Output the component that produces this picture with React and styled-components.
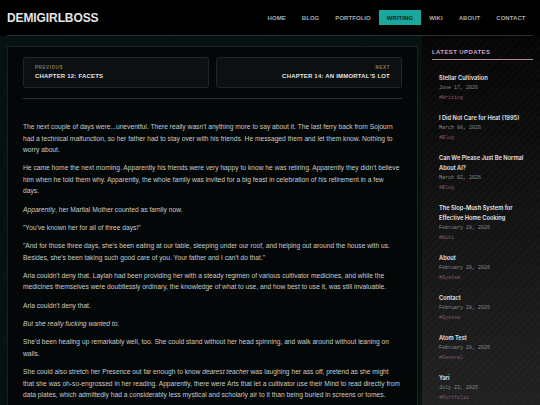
import React from 'react';
import styled, { createGlobalStyle } from 'styled-components';

const GlobalStyle = createGlobalStyle`
  html, body {
    margin: 0;
    padding: 0;
    background: #031010;
    color: #c6caca;
    font-family: "Liberation Sans", Arial, sans-serif;
    overflow: hidden;
  }
`;

const Page = styled.div`
  width: 540px;
  height: 405px;
  overflow: hidden;
  background:
    repeating-linear-gradient(135deg, rgba(255,255,255,0.012) 0 2px, transparent 2px 5px),
    #031111;
`;

const Header = styled.header`
  background: #000;
  height: 36px;
  padding: 0 7px;
  box-sizing: border-box;
`;

const HeaderInner = styled.div`
  height: 36px;
  display: flex;
  align-items: center;
  justify-content: space-between;
  border-bottom: 1px solid #262e2e;
  box-sizing: border-box;
`;

const Logo = styled.div`
  font-size: 12px;
  font-weight: bold;
  color: #e4e6e6;
  letter-spacing: -0.1px;
`;

const Nav = styled.nav`
  display: flex;
  align-items: center;
  gap: 1px;
`;

const NavItem = styled.a`
  font-size: 6px;
  font-weight: bold;
  letter-spacing: 0.05px;
  text-transform: uppercase;
  padding: 4.5px 7.5px;
  color: ${p => (p.$active ? '#062624' : '#a9adad')};
  background: ${p => (p.$active ? '#1aa89d' : 'transparent')};
`;

const Body = styled.div`
  display: flex;
  align-items: flex-start;
`;

const Main = styled.main`
  margin: 10px 0 0 7px;
  width: 411px;
  flex-shrink: 0;
  box-sizing: border-box;
  border: 1px solid #1a2323;
  background: #040707;
  padding: 10px 15px 20px;
`;

const Pager = styled.div`
  display: flex;
  gap: 7px;
  padding-bottom: 10px;
  border-bottom: 1px solid #2a3131;
`;

const PagerCard = styled.a`
  flex: 1;
  height: 31px;
  box-sizing: border-box;
  background: #0c1010;
  border: 1px solid #1e2626;
  border-radius: 3px;
  padding: 7px 11px;
  display: flex;
  flex-direction: column;
  gap: 3px;
  align-items: ${p => (p.$right ? 'flex-end' : 'flex-start')};
`;

const PagerLabel = styled.span`
  font-size: 4.5px;
  font-weight: bold;
  letter-spacing: 0.6px;
  color: #857d68;
  text-transform: uppercase;
`;

const PagerTitle = styled.span`
  font-size: 6px;
  font-weight: bold;
  letter-spacing: 0.2px;
  color: #e2e4e4;
  text-transform: uppercase;
`;

const Article = styled.article`
  padding: 22px 1.8px 0 0;
`;

const Para = styled.p`
  margin: 0 0 6.8px;
  font-size: 6.7px;
  line-height: 11.5px;
  color: #c8cccc;
  font-style: ${p => (p.$italic ? 'italic' : 'normal')};
`;

const Sidebar = styled.aside`
  flex: 1;
  align-self: stretch;
  min-height: 369px;
  margin-left: 4px;
  padding: 13px 7px 0 10px;
  background:
    repeating-linear-gradient(135deg, rgba(255,255,255,0.015) 0 2px, transparent 2px 5px),
    linear-gradient(to bottom, #050506, #232323);
`;

const SideTitle = styled.h3`
  margin: 0 0 13px;
  padding-bottom: 4px;
  border-bottom: 1px solid #a88ca0;
  font-size: 6px;
  font-weight: bold;
  letter-spacing: 0.4px;
  color: #cfa3c3;
  text-transform: uppercase;
`;

const UpdateList = styled.ul`
  list-style: none;
  margin: 0;
  padding: 0 0 0 7px;
  display: flex;
  flex-direction: column;
  gap: 10px;
`;

const Update = styled.li`
  display: flex;
  flex-direction: column;
`;

const UpdateTitle = styled.span`
  font-family: "Inter", "Noto Sans", sans-serif;
  font-size: 5.7px;
  font-weight: 600;
  line-height: 10px;
  color: #e6e6e6;
`;

const UpdateMeta = styled.span`
  font-family: "Liberation Mono", monospace;
  font-size: 5px;
  line-height: 10px;
  color: ${p => (p.$tag ? '#8a5878' : '#8c8c8c')};
`;

const navItems = ['Home', 'Blog', 'Portfolio', 'Writing', 'Wiki', 'About', 'Contact'];

const updates = [
  { title: 'Stellar Cultivation', date: 'June 17, 2026', tag: '#Writing' },
  { title: 'I Did Not Care for Heat (1995)', date: 'March 08, 2026', tag: '#Blog' },
  { title: 'Can We Please Just Be Normal About AI?', date: 'March 02, 2026', tag: '#Blog' },
  { title: 'The Slop-Mush System for Effective Home Cooking', date: 'February 28, 2026', tag: '#Wiki' },
  { title: 'About', date: 'February 28, 2026', tag: '#System' },
  { title: 'Contact', date: 'February 28, 2026', tag: '#System' },
  { title: 'Atom Test', date: 'February 28, 2026', tag: '#General' },
  { title: 'Yari', date: 'July 22, 2025', tag: '#Portfolio' },
];

export default function App() {
  return (
    <>
      <GlobalStyle />
      <Page>
        <Header>
          <HeaderInner>
            <Logo>DEMIGIRLBOSS</Logo>
            <Nav>
              {navItems.map(item => (
                <NavItem key={item} $active={item === 'Writing'}>
                  {item}
                </NavItem>
              ))}
            </Nav>
          </HeaderInner>
        </Header>
        <Body>
          <Main>
            <Pager>
              <PagerCard>
                <PagerLabel>Previous</PagerLabel>
                <PagerTitle>Chapter 12: Facets</PagerTitle>
              </PagerCard>
              <PagerCard $right>
                <PagerLabel>Next</PagerLabel>
                <PagerTitle>Chapter 14: An Immortal's Lot</PagerTitle>
              </PagerCard>
            </Pager>
            <Article>
              <Para>
                The next couple of days were...uneventful. There really wasn't anything more to say about it. The last
                ferry back from Sojourn had a technical malfunction, so her father had to stay over with his friends. He
                messaged them and let them know. Nothing to worry about.
              </Para>
              <Para>
                He came home the next morning. Apparently his friends were very happy to know he was retiring.
                Apparently they didn't believe him when he told them why. Apparently, the whole family was invited for a
                big feast in celebration of his retirement in a few days.
              </Para>
              <Para>
                <em>Apparently</em>, her Martial Mother counted as family now.
              </Para>
              <Para>"You've known her for all of three days!"</Para>
              <Para>
                "And for those three days, she's been eating at our table, sleeping under our roof, and helping out
                around the house with us. Besides, she's been taking such good care of you. Your father and I can't do
                that."
              </Para>
              <Para>
                Aria couldn't deny that. Laylah had been providing her with a steady regimen of various cultivator
                medicines, and while the medicines themselves were doubtlessly ordinary, the knowledge of what to use,
                and how best to use it, was still invaluable.
              </Para>
              <Para>Aria couldn't deny that.</Para>
              <Para $italic>But she really fucking wanted to.</Para>
              <Para>
                She'd been healing up remarkably well, too. She could stand without her head spinning, and walk around
                without leaning on walls.
              </Para>
              <Para>
                She could also stretch her Presence out far enough to know <em>dearest teacher</em> was laughing her ass
                off, pretend as she might that she was oh-so-engrossed in her reading. Apparently, there were Arts that
                let a cultivator use their Mind to read directly from data plates, which admittedly had a considerably
                less mystical and scholarly air to it than being buried in screens or tomes.
              </Para>
            </Article>
          </Main>
          <Sidebar>
            <SideTitle>Latest Updates</SideTitle>
            <UpdateList>
              {updates.map(u => (
                <Update key={u.title}>
                  <UpdateTitle>{u.title}</UpdateTitle>
                  <UpdateMeta>{u.date}</UpdateMeta>
                  <UpdateMeta $tag>{u.tag}</UpdateMeta>
                </Update>
              ))}
            </UpdateList>
          </Sidebar>
        </Body>
      </Page>
    </>
  );
}
